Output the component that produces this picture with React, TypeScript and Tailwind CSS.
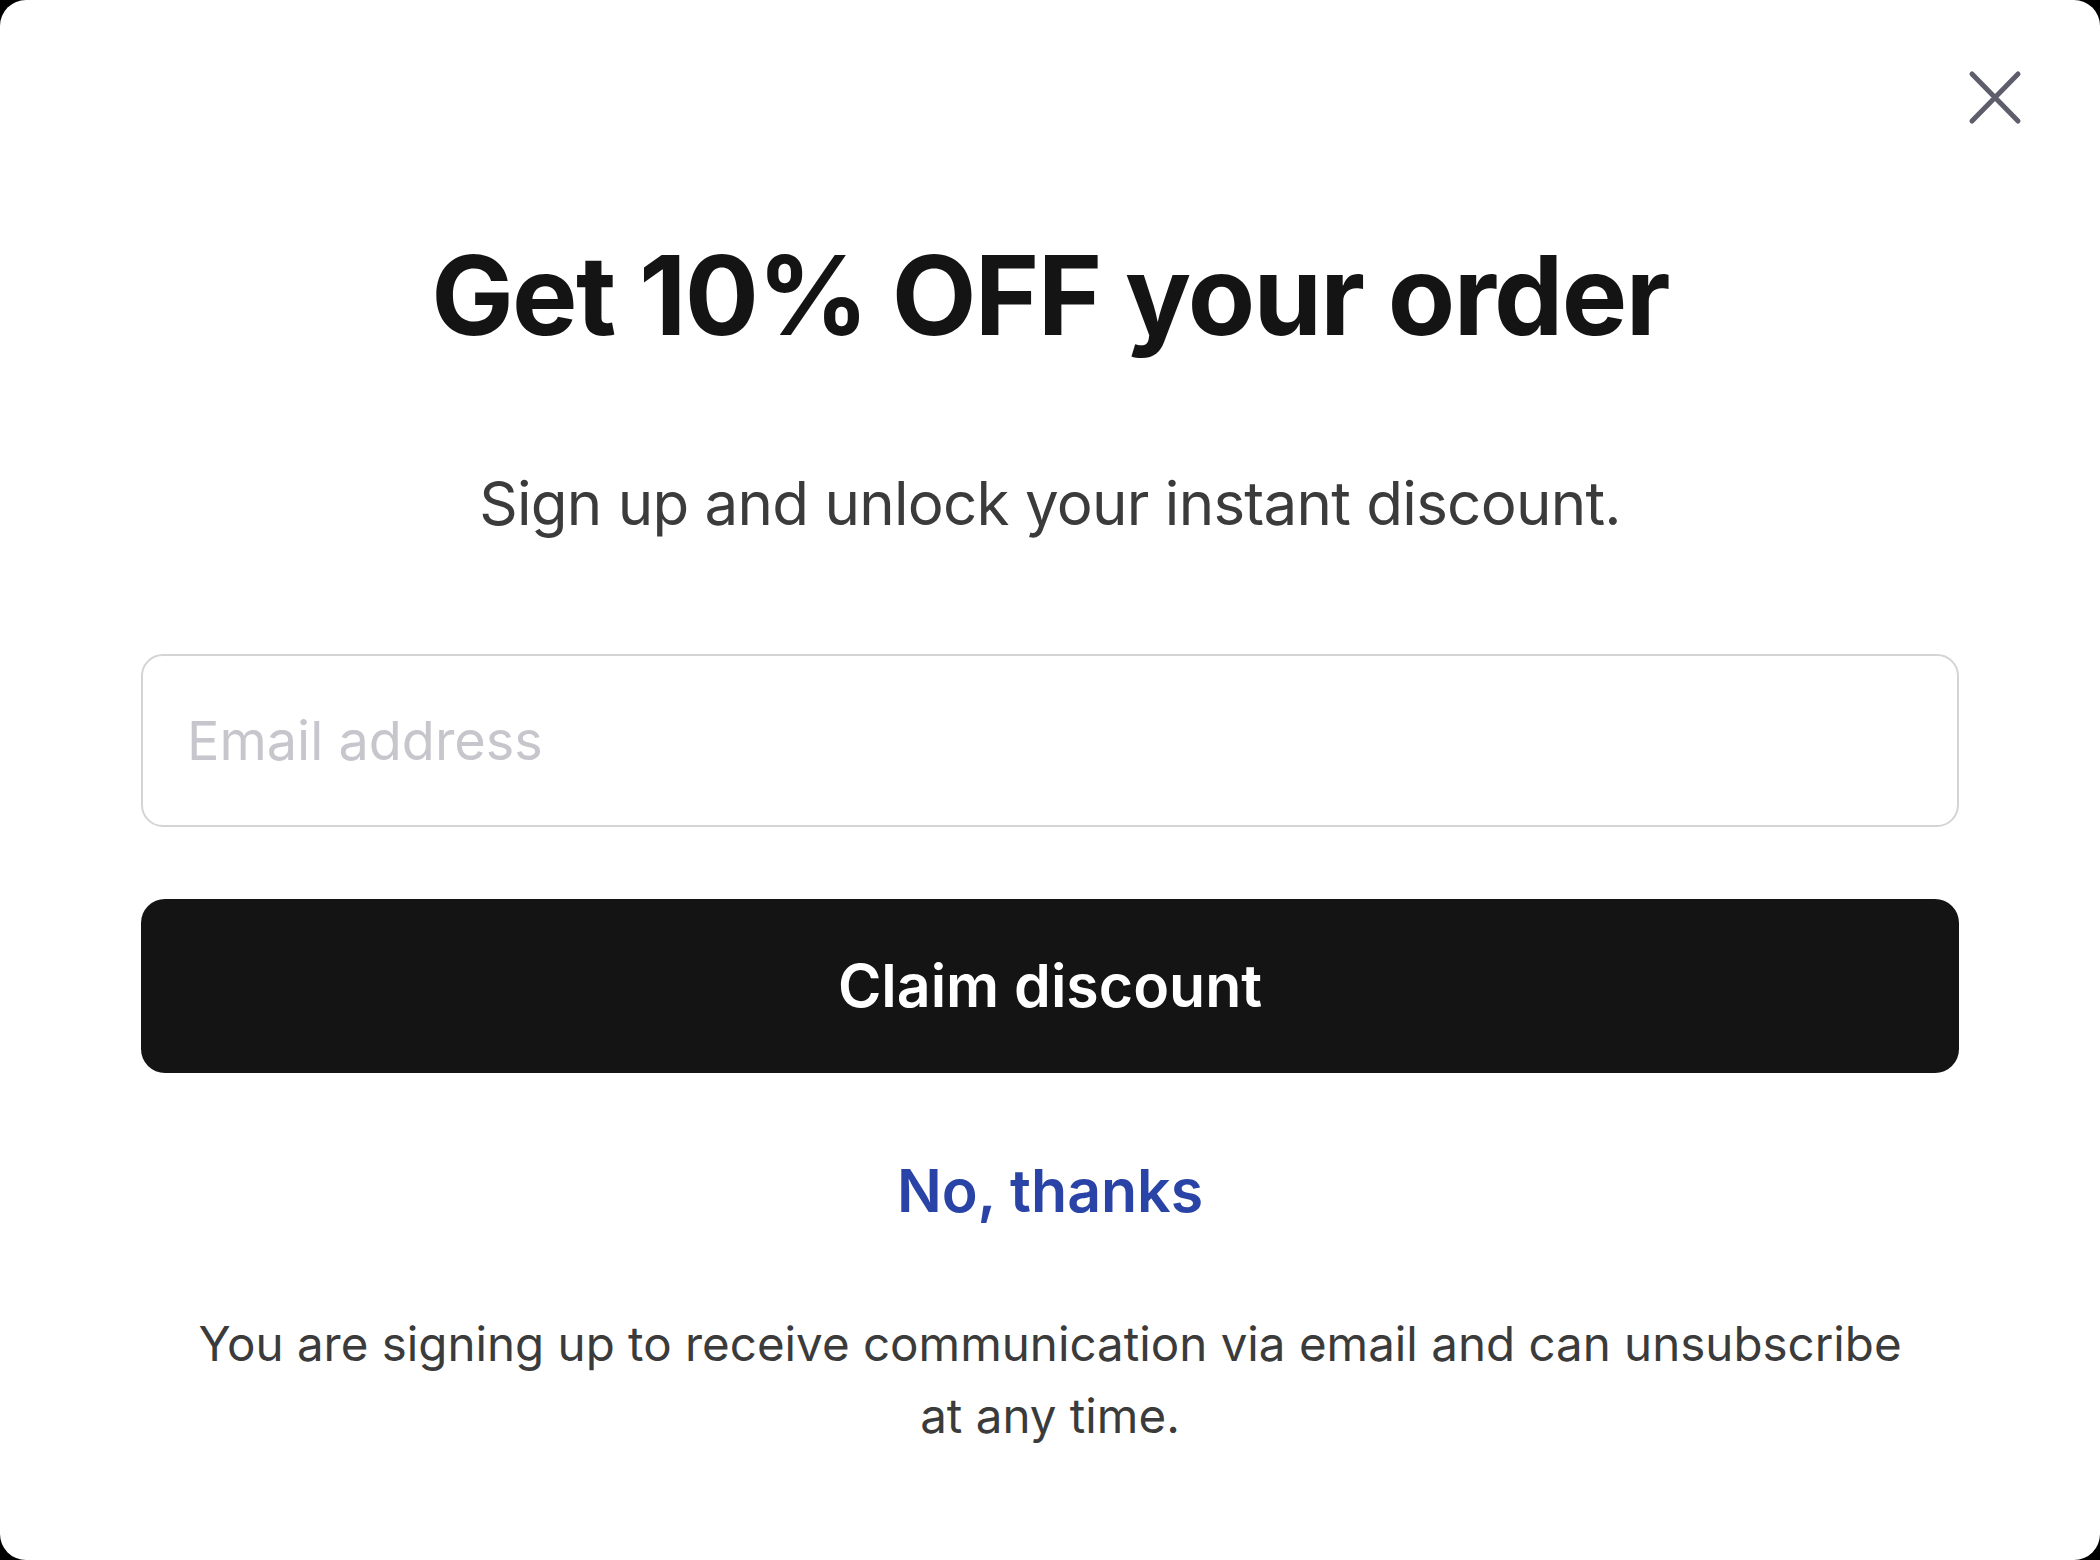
export default function App() {
  return (
    <div className="min-h-screen bg-black font-['Inter',sans-serif]">
      <div className="relative flex h-[1560px] w-[2100px] flex-col items-center rounded-[26px] bg-white px-[141px] pt-[240px]">
        <button
          type="button"
          aria-label="Close"
          className="absolute right-[77px] top-[69px] h-[56px] w-[56px] text-[#5d5d6c]"
        >
          <svg viewBox="0 0 56 56" className="h-full w-full" fill="none" stroke="currentColor" strokeWidth={5} strokeLinecap="round">
            <path d="M5 5L51 52M51 5L5 52" />
          </svg>
        </button>

        <h1 className="text-[110px] font-bold leading-none tracking-[-0.015em] text-[#141414]">Get 10% OFF your order</h1>
        <p className="mt-[123px] text-[60px] leading-none tracking-[-0.012em] text-[#3b3b3b]">
          Sign up and unlock your instant discount.
        </p>

        <input
          type="email"
          placeholder="Email address"
          className="mt-[121px] h-[173px] w-full rounded-[22px] border-2 border-[#d4d4d4] bg-white px-[44px] text-[54px] text-[#141414] outline-none placeholder:text-[#c6c6cc]"
        />

        <button
          type="button"
          className="mt-[72px] flex h-[174px] w-full items-center justify-center rounded-[24px] bg-[#141414] text-[59px] font-semibold text-white"
        >
          Claim discount
        </button>

        <button type="button" className="mt-[88px] text-[59px] font-semibold leading-none text-[#2a43a6]">
          No, thanks
        </button>

        <p className="mt-[88px] max-w-[1740px] text-center text-[47.5px] leading-[72px] text-[#3b3b3b]">
          You are signing up to receive communication via email and can unsubscribe at any time.
        </p>
      </div>
    </div>
  );
}
